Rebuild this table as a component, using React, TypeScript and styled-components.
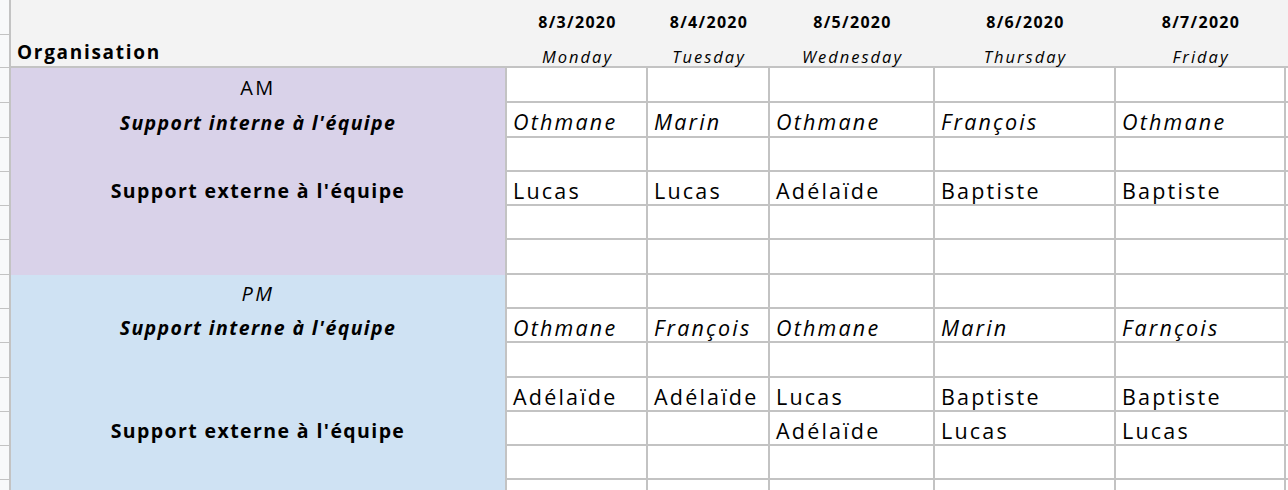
import React from 'react'
import styled, { createGlobalStyle } from 'styled-components'

const GlobalStyle = createGlobalStyle`
  html, body {
    margin: 0;
    padding: 0;
    background: #ffffff;
    overflow: hidden;
  }
  body {
    font-family: "Open Sans", "Noto Sans", sans-serif;
    color: #000000;
  }
`

type Tone = 'am' | 'pm'

type Block = {
    tone: Tone,
    label: string,
    labelRow: number,
    interneRow: number,
    externeRow: number,
    rows: number[],
    // one entry per row in the block, five names each (empty string = blank cell)
    data: string[][],
    italicRows: number[],
}

const LINE = '#c3c3c3'
const COLS = '11px 496px 141px 122px 165px 181px 170px 1fr'

const dates = [
    { date: '8/3/2020', day: 'Monday' },
    { date: '8/4/2020', day: 'Tuesday' },
    { date: '8/5/2020', day: 'Wednesday' },
    { date: '8/6/2020', day: 'Thursday' },
    { date: '8/7/2020', day: 'Friday' },
]

const empty = ['', '', '', '', '']

const blocks: Block[] = [
    {
        tone: 'am',
        label: 'AM',
        labelRow: 0,
        interneRow: 1,
        externeRow: 3,
        rows: [35, 35, 34, 34, 34, 35],
        italicRows: [1],
        data: [
            empty,
            ['Othmane', 'Marin', 'Othmane', 'François', 'Othmane'],
            empty,
            ['Lucas', 'Lucas', 'Adélaïde', 'Baptiste', 'Baptiste'],
            empty,
            empty,
        ],
    },
    {
        tone: 'pm',
        label: 'PM',
        labelRow: 0,
        interneRow: 1,
        externeRow: 4,
        rows: [34, 34, 35, 34, 34, 34, 34],
        italicRows: [1],
        data: [
            empty,
            ['Othmane', 'François', 'Othmane', 'Marin', 'Farnçois'],
            empty,
            ['Adélaïde', 'Adélaïde', 'Lucas', 'Baptiste', 'Baptiste'],
            ['', '', 'Adélaïde', 'Lucas', 'Lucas'],
            empty,
            empty,
        ],
    },
]

const Sheet = styled.div`
  display: grid;
  grid-template-columns: ${COLS};
  grid-template-rows: 35px 33px ${blocks.map(b => b.rows.map(r => `${r}px`).join(' ')).join(' ')};
  width: 1288px;
  height: 490px;
  overflow: hidden;
`

const RowHead = styled.div`
  box-sizing: border-box;
  background: #f8f9fa;
  border-right: 2px solid ${LINE};
  border-bottom: 1px solid ${LINE};
`

const HeaderCell = styled.div<{ $last?: boolean, $left?: boolean }>`
  box-sizing: border-box;
  background: #f3f3f3;
  display: flex;
  align-items: ${p => p.$left ? 'center' : 'flex-end'};
  justify-content: ${p => p.$left ? 'flex-start' : 'center'};
  padding: ${p => p.$left ? '3px 6px 0' : p.$last ? '0 0 1px' : '0 0 5px'};
  border-bottom: ${p => p.$last ? `2px solid ${LINE}` : 'none'};
  line-height: 1;
`

const DateLabel = styled.span`
  font-weight: 700;
  font-size: 16px;
  letter-spacing: 1.3px;
`

const DayLabel = styled.span`
  font-style: italic;
  font-size: 16.5px;
  letter-spacing: 2px;
`

const OrgTitle = styled.span`
  font-weight: 700;
  font-size: 19px;
  letter-spacing: 1.7px;
`

const BlockCell = styled.div<{ $tone: Tone, $span: number, $rows: string }>`
  grid-column: 2;
  grid-row: span ${p => p.$span};
  box-sizing: border-box;
  background: ${p => p.$tone === 'am' ? '#d9d2e9' : '#cfe2f3'};
  border-right: 2px solid ${LINE};
  display: grid;
  grid-template-rows: ${p => p.$rows};
`

const BlockLabel = styled.div<{ $bold?: boolean, $italic?: boolean }>`
  display: flex;
  align-items: center;
  justify-content: center;
  padding-top: 3px;
  font-size: ${p => p.$bold ? '19.5px' : '20px'};
  font-weight: ${p => p.$bold ? 700 : 400};
  font-style: ${p => p.$italic ? 'italic' : 'normal'};
  letter-spacing: ${p => p.$bold ? '1.4px' : '2.4px'};
`

const Cell = styled.div<{ $italic?: boolean }>`
  box-sizing: border-box;
  border-right: 2px solid ${LINE};
  border-bottom: 2px solid ${LINE};
  display: flex;
  align-items: center;
  padding: 4px 0 0 6px;
  font-size: 21.5px;
  font-style: ${p => p.$italic ? 'italic' : 'normal'};
  letter-spacing: 2.2px;
  white-space: nowrap;
  overflow: hidden;
`

export default function App() {
    const cells: React.ReactNode[] = []

    // header: dates line, then Organisation + day names
    cells.push(<RowHead key="h1-n" />)
    cells.push(<HeaderCell key="h1-org" />)
    dates.forEach(d => cells.push(<HeaderCell key={`h1-${d.date}`}><DateLabel>{d.date}</DateLabel></HeaderCell>))
    cells.push(<HeaderCell key="h1-x" />)

    cells.push(<RowHead key="h2-n" />)
    cells.push(<HeaderCell key="h2-org" $last $left><OrgTitle>Organisation</OrgTitle></HeaderCell>)
    dates.forEach(d => cells.push(<HeaderCell key={`h2-${d.date}`} $last><DayLabel>{d.day}</DayLabel></HeaderCell>))
    cells.push(<HeaderCell key="h2-x" $last />)

    blocks.forEach(block => {
        block.data.forEach((names, i) => {
            cells.push(<RowHead key={`${block.tone}-${i}-n`} />)
            if (i === 0) {
                cells.push(
                    <BlockCell key={`${block.tone}-block`} $tone={block.tone} $span={block.rows.length}
                        $rows={block.rows.map(r => `${r}px`).join(' ')}>
                        {block.rows.map((_, r) => {
                            if (r === block.labelRow) return <BlockLabel key={r} $italic={block.tone === 'pm'}>{block.label}</BlockLabel>
                            if (r === block.interneRow) return <BlockLabel key={r} $bold $italic>Support interne à l'équipe</BlockLabel>
                            if (r === block.externeRow) return <BlockLabel key={r} $bold>Support externe à l'équipe</BlockLabel>
                            return <div key={r} />
                        })}
                    </BlockCell>
                )
            }
            const italic = block.italicRows.includes(i)
            names.forEach((name, c) => cells.push(<Cell key={`${block.tone}-${i}-${c}`} $italic={italic}>{name}</Cell>))
            cells.push(<Cell key={`${block.tone}-${i}-x`} />)
        })
    })

    return (
        <React.Fragment>
            <GlobalStyle />
            <Sheet>{cells}</Sheet>
        </React.Fragment>
    )
}
